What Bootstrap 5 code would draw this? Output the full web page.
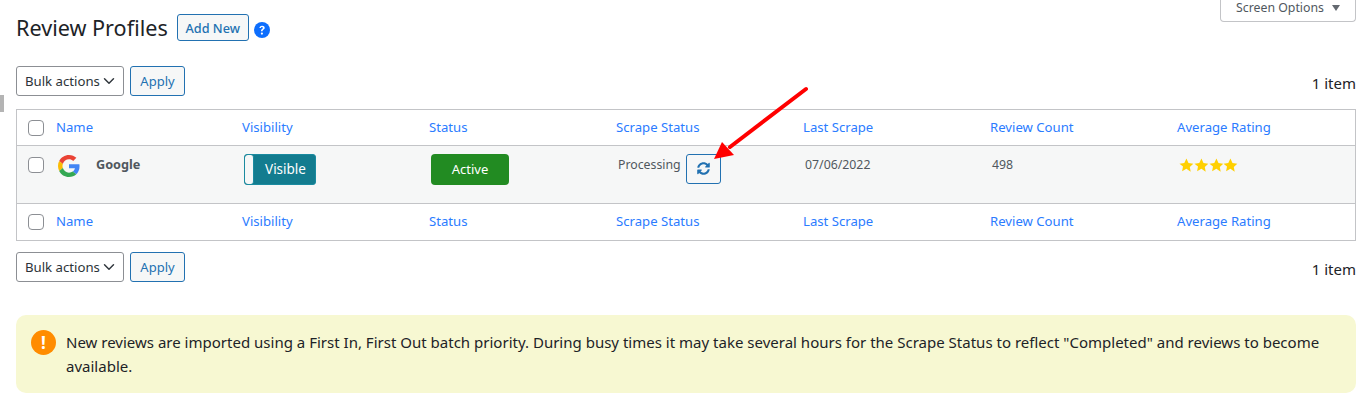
<!DOCTYPE html>
<html lang="en">
<head>
<meta charset="utf-8">
<title>Review Profiles</title>
<link href="https://cdn.jsdelivr.net/npm/bootstrap@5.3.0/dist/css/bootstrap.min.css" rel="stylesheet">
<style>
html,body{height:416px;overflow:hidden;background:#fff}
body{font-family:"Noto Sans","Open Sans",sans-serif;font-size:14px;color:#2c3338}
.rp-page{position:relative;height:396px;padding:0 13px 0 16px;border-left:1px solid #f4f4f4;margin-left:-1px}
.rp-head{height:66px;padding-top:14px}
.rp-title{font-size:21.6px;font-weight:400;margin:0 9px 0 0;line-height:27px;color:#1d2327}
.rp-add{font-size:12.7px;font-weight:500;color:#2271b1;border:1px solid #2271b1;background:#f6f7f7;border-radius:3px;height:27px;width:72px;padding:1px 0 0;line-height:25px}
.rp-help{margin:8px 0 0 5px}
.rp-screen{width:136px;height:22px;margin-top:-14px;border:1px solid #c3c4c7;border-top:0;border-radius:0 0 4px 4px;font-size:12.3px;color:#50575e;background:#fff;padding-bottom:5px}
.rp-caret{border-left:4px solid transparent;border-right:4px solid transparent;border-top:6px solid #646970;margin-left:8px}
.rp-nav{height:30px}
.rp-select{width:108px;height:30px;font-size:13.2px;padding:0 20px 0 8px;border-color:#8c8f94;color:#2c3338;border-radius:3px;background-position:right 6px center;background-size:16px 12px;line-height:28px}
.rp-apply{width:55px;height:30px;font-size:13px;padding:1px 0 0;color:#2271b1;border:1px solid #2271b1;background:#f6f7f7;border-radius:3px;margin-left:6px}
.rp-count{font-size:15px;color:#1d2327;padding-top:5px}
.rp-tbl-wrap{margin-top:13px;border:1px solid #c3c4c7}
.rp-tbl{table-layout:fixed;margin:0;width:100%}
.rp-tbl>*>tr>*{padding:0;border:0;background:transparent;box-shadow:none;vertical-align:middle}
.rp-tbl th,.rp-tbl td{font-weight:400}
.rp-tbl .rp-hrow>*{height:35px;font-size:13.15px}
.rp-tbl .rp-hrow a{color:#2b7cff;text-decoration:none}
.rp-tbl .rp-hrow .rp-namelink{margin-left:1px}
.rp-tbl>thead>tr>*{border-bottom:1px solid #c3c4c7;padding-top:2px}
.rp-tbl>tfoot>tr>*{border-top:1px solid #c3c4c7}
.rp-tbl>tfoot>.rp-hrow>*{height:37px}
.rp-tbl>tbody>tr>td{height:58px;background:#f6f7f7;vertical-align:top;font-size:12.3px;color:#50575e;padding-top:8px;--bs-table-bg-type:#f6f7f7}
.rp-chk{width:38px}
.rp-col{width:187px}
.rp-tbl .form-check-input{width:16px;height:16px;margin:0 0 0 11px;display:block;border:1px solid #8c8f94;border-radius:4px;background-color:#fff}
.rp-tbl .rp-rowchk{margin-top:3px}
.rp-g{width:22px;height:22px;margin:1px 16px 0 3px}
.rp-gname{font-weight:700;font-size:12.7px;color:#50575e;line-height:21px}
.rp-toggle{display:flex;width:72px;height:31px;border:1px solid #1b8ba0;border-radius:3px;background:#137c8f;color:#fff;font-size:13.5px;overflow:hidden;margin-left:2px}
.rp-knob{width:9px;background:#f6f7f7;border-right:1px solid #1b8ba0;border-radius:3px;flex:none}
.rp-togtxt{flex:1;text-align:center;line-height:29px;padding-left:2px}
.rp-active{width:78px;height:31px;border-radius:4px;background:#228b22;color:#fff;font-size:13px;text-align:center;line-height:31px;margin-left:2px}
.rp-proc{margin-left:2px;line-height:21px;padding-right:5px}
.rp-ref{width:35px;height:30px;border:1px solid #2271b1;border-radius:3px;background:#f6f7f7;padding:0}
.rp-ref svg{width:13px;height:13px;fill:#2271b1}
.rp-cell{padding-left:2px;line-height:21px}
.rp-stars{padding-left:2px;margin-top:4px}
.rp-stars svg{width:14.8px;height:14.8px;fill:#ffd000;display:block}
.rp-nav2{margin-top:11px}
.rp-notice{margin-top:33px;height:78px;background:#f7f8d2;border-radius:10px;padding:15px 24px 0 15px;font-size:15.03px;line-height:24px;color:#1d2327}
.rp-warn{width:25px;height:25px;border-radius:50%;background:#ff8c00;color:#fff;flex:none;margin:0 10px 0 0;font-weight:700;font-size:17px;line-height:25px;text-align:center}
.rp-mark{position:absolute;left:0;top:95px;width:4px;height:17px;background:#b4b4b4}
.rp-arrow{position:absolute;left:700px;top:80px;width:120px;height:90px;pointer-events:none}
</style>
</head>
<body>
<div class="rp-page">
  <div class="rp-mark"></div>
  <div class="rp-head d-flex align-items-start">
    <h1 class="rp-title">Review Profiles</h1>
    <button class="btn rp-add" type="button">Add New</button>
    <svg class="rp-help" width="16" height="16" viewBox="0 0 16 16"><circle cx="8" cy="8" r="8" fill="#0d6efd"/><path d="M5.4 6.1c0-1.5 1.1-2.4 2.7-2.4s2.6.9 2.6 2.1c0 1-.6 1.5-1.3 2-.6.4-.8.6-.8 1.2v.3H7v-.5c0-.9.4-1.4 1-1.8.6-.4.9-.7.9-1.1 0-.5-.4-.8-.9-.8-.6 0-1 .4-1 1z" fill="#fff"/><circle cx="7.9" cy="11.6" r="1.1" fill="#fff"/></svg>
    <div class="rp-screen ms-auto d-flex align-items-center justify-content-center">Screen Options<span class="rp-caret"></span></div>
  </div>

  <div class="rp-nav d-flex align-items-center">
    <select class="form-select rp-select"><option>Bulk actions</option></select>
    <button class="btn rp-apply" type="button">Apply</button>
    <div class="rp-count ms-auto">1 item</div>
  </div>

  <div class="rp-tbl-wrap">
    <table class="table rp-tbl">
      <colgroup><col class="rp-chk"><col class="rp-col"><col class="rp-col"><col class="rp-col"><col class="rp-col"><col class="rp-col"><col class="rp-col"><col></colgroup>
      <thead>
        <tr class="rp-hrow">
          <th><input class="form-check-input" type="checkbox" aria-label="Select all"></th>
          <th><a class="rp-namelink" href="#">Name</a></th><th><a href="#">Visibility</a></th><th><a href="#">Status</a></th><th><a href="#">Scrape Status</a></th><th><a href="#">Last Scrape</a></th><th><a href="#">Review Count</a></th><th><a href="#">Average Rating</a></th>
        </tr>
      </thead>
      <tbody>
        <tr>
          <td><input class="form-check-input rp-rowchk" type="checkbox" aria-label="Select Google"></td>
          <td><div class="d-flex align-items-start">
            <svg class="rp-g" viewBox="0 0 48 48"><path fill="#EA4335" d="M24 9.5c3.54 0 6.71 1.22 9.21 3.6l6.85-6.85C35.9 2.38 30.47 0 24 0 14.62 0 6.51 5.38 2.56 13.22l7.98 6.19C12.43 13.72 17.74 9.5 24 9.5z"/><path fill="#4285F4" d="M46.98 24.55c0-1.57-.15-3.09-.38-4.55H24v9.02h12.94c-.58 2.96-2.26 5.48-4.78 7.18l7.73 6c4.51-4.18 7.09-10.36 7.09-17.65z"/><path fill="#FBBC05" d="M10.53 28.59c-.48-1.45-.76-2.99-.76-4.59s.27-3.14.76-4.59l-7.98-6.19C.92 16.46 0 20.12 0 24c0 3.88.92 7.54 2.56 10.78l7.97-6.19z"/><path fill="#34A853" d="M24 48c6.48 0 11.93-2.13 15.89-5.81l-7.73-6c-2.15 1.45-4.92 2.3-8.16 2.3-6.26 0-11.57-4.22-13.47-9.91l-7.98 6.19C6.51 42.62 14.62 48 24 48z"/></svg>
            <span class="rp-gname">Google</span></div></td>
          <td><div class="rp-toggle"><span class="rp-knob"></span><span class="rp-togtxt">Visible</span></div></td>
          <td><div class="rp-active">Active</div></td>
          <td><div class="d-flex align-items-start"><span class="rp-proc">Processing</span>
            <button class="btn rp-ref d-flex align-items-center justify-content-center" type="button" aria-label="Refresh"><svg viewBox="0 0 512 512"><path d="M370.72 133.28C339.458 104.008 298.888 87.962 255.848 88c-77.458.068-144.328 53.178-162.791 126.85-1.344 5.363-6.122 9.15-11.651 9.15H24.103c-7.498 0-13.194-6.807-11.807-14.176C33.933 94.924 134.813 8 256 8c66.448 0 126.791 26.136 171.315 68.685L463.03 40.97C478.149 25.851 504 36.559 504 57.941V192c0 13.255-10.745 24-24 24H345.941c-21.382 0-32.09-25.851-16.971-40.971l41.75-41.749zM32 296h134.059c21.382 0 32.09 25.851 16.971 40.971l-41.75 41.75c31.262 29.273 71.835 45.319 114.876 45.28 77.418-.07 144.315-53.144 162.787-126.849 1.344-5.363 6.122-9.15 11.651-9.15h57.304c7.498 0 13.194 6.807 11.807 14.176C478.067 417.076 377.187 504 256 504c-66.448 0-126.791-26.136-171.315-68.685L48.97 471.03C33.851 486.149 8 475.441 8 454.059V320c0-13.255 10.745-24 24-24z"/></svg></button></div></td>
          <td><div class="rp-cell">07/06/2022</div></td>
          <td><div class="rp-cell">498</div></td>
          <td><div class="rp-stars d-flex">
            <svg viewBox="0 0 24 24"><path d="M12 1l3.4 7.2 7.8 1-5.7 5.4 1.5 7.8L12 17.6l-7 3.8 1.5-7.8L.8 9.2l7.8-1z"/></svg>
            <svg viewBox="0 0 24 24"><path d="M12 1l3.4 7.2 7.8 1-5.7 5.4 1.5 7.8L12 17.6l-7 3.8 1.5-7.8L.8 9.2l7.8-1z"/></svg>
            <svg viewBox="0 0 24 24"><path d="M12 1l3.4 7.2 7.8 1-5.7 5.4 1.5 7.8L12 17.6l-7 3.8 1.5-7.8L.8 9.2l7.8-1z"/></svg>
            <svg viewBox="0 0 24 24"><path d="M12 1l3.4 7.2 7.8 1-5.7 5.4 1.5 7.8L12 17.6l-7 3.8 1.5-7.8L.8 9.2l7.8-1z"/></svg>
          </div></td>
        </tr>
      </tbody>
      <tfoot>
        <tr class="rp-hrow">
          <th><input class="form-check-input" type="checkbox" aria-label="Select all"></th>
          <th><a class="rp-namelink" href="#">Name</a></th><th><a href="#">Visibility</a></th><th><a href="#">Status</a></th><th><a href="#">Scrape Status</a></th><th><a href="#">Last Scrape</a></th><th><a href="#">Review Count</a></th><th><a href="#">Average Rating</a></th>
        </tr>
      </tfoot>
    </table>
  </div>

  <div class="rp-nav rp-nav2 d-flex align-items-center">
    <select class="form-select rp-select"><option>Bulk actions</option></select>
    <button class="btn rp-apply" type="button">Apply</button>
    <div class="rp-count ms-auto">1 item</div>
  </div>

  <div class="rp-notice d-flex align-items-start">
    <div class="rp-warn">!</div>
    <div>New reviews are imported using a First In, First Out batch priority. During busy times it may take several hours for the Scrape Status to reflect "Completed" and reviews to become available.</div>
  </div>

  <svg class="rp-arrow" viewBox="0 0 120 90"><path d="M106 9L30 67" stroke="#f00" stroke-width="4" stroke-linecap="round" fill="none"/><path d="M14 79L22 62L34 75z" fill="#f00"/></svg>
</div>
</body>
</html>
